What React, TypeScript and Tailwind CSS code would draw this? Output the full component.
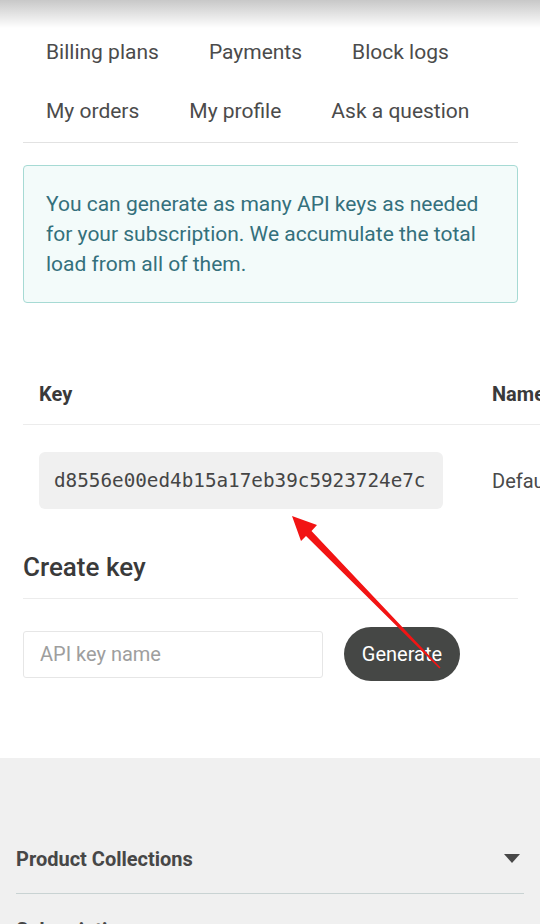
const navItems = ["Billing plans", "Payments", "Block logs", "My orders", "My profile", "Ask a question"];

function PointerArrow() {
    return (
        <svg className="pointer-events-none absolute left-0 top-0" width="540" height="924" viewBox="0 0 540 924">
            <polygon
                points="292,516 317,525 311.5,531 440.5,667.5 439.5,668.5 306,536 301,541"
                fill="#f21414"
            />
        </svg>
    );
}

export default function App() {
    return (
        <div className="relative min-h-[924px] overflow-hidden bg-white font-['Roboto',sans-serif]">
            {/* header shadow from above */}
            <div className="pointer-events-none absolute inset-x-0 top-0 h-[28px] bg-gradient-to-b from-[#c8c8c8] to-white" />

            <main className="pl-[23px] pr-[22px] pt-[23px]">
                {/* Account tabs */}
                <nav className="flex flex-wrap gap-x-[50px] border-b border-[#e2e2e2] pb-[1px] pl-[23px]">
                    {navItems.map((item) => (
                        <a key={item} className="text-[21px] leading-[59px] text-[#4b4b4b]">
                            {item}
                        </a>
                    ))}
                </nav>

                {/* Info */}
                <div className="mt-[22px] rounded-[4px] border border-[#a6dad4] bg-[#f3fbfa] px-[22px] py-[23px] text-[21px] leading-[30px] text-[#34707c]">
                    You can generate as many API keys as needed for your subscription. We accumulate the total load from all of them.
                </div>

                {/* Keys table */}
                <div className="-mr-[22px] mt-[60px] overflow-hidden">
                    <div className="w-[640px]">
                        <div className="flex h-[62px] items-center border-b border-[#ececec] text-[20px] font-bold text-[#3a3a3a]">
                            <div className="w-[453px] pl-4">Key</div>
                            <div className="pl-4">Name</div>
                        </div>
                        <div className="flex items-center pb-[28px] pt-[27px]">
                            <div className="w-[453px] pl-4">
                                <div className="w-[404px] rounded-[6px] bg-[#f0f0f0] px-[15px] py-[14px] font-['DejaVu_Sans_Mono',monospace] text-[19.3px] leading-[29px] text-[#454545]">
                                    d8556e00ed4b15a17eb39c5923724e7c
                                </div>
                            </div>
                            <div className="pl-4 text-[20px] text-[#4a4a4a]">Default</div>
                        </div>
                    </div>
                </div>

                {/* Create key */}
                <h2 className="mt-[12px] border-b border-[#ececec] pb-[13px] text-[26px] font-medium leading-[36px] text-[#3a3a3a]">
                    Create key
                </h2>
                <form className="mt-[28px] flex items-center gap-[21px]">
                    <input
                        placeholder="API key name"
                        className="h-[47px] w-[300px] rounded-[3px] border border-[#e6e6e6] px-[16px] text-[20px] text-[#444] outline-none placeholder:text-[#9e9e9e]"
                    />
                    <button type="button" className="h-[54px] w-[116px] rounded-full bg-[#454745] text-[20px] text-white">
                        Generate
                    </button>
                </form>
            </main>

            {/* Footer */}
            <footer className="mt-[77px] bg-[#f0f0f0] px-[16px] pb-10 pt-[89px]">
                <div className="flex items-center justify-between border-b border-[#c9d3d3] pb-[22px]">
                    <span className="text-[20px] font-bold leading-[24px] text-[#474747]">Product Collections</span>
                    <svg width="16" height="10" viewBox="0 0 16 10" className="mr-[4px]">
                        <polygon points="0,0 16,0 8,9" fill="#474747" />
                    </svg>
                </div>
                <div className="flex items-center justify-between pt-[24px]">
                    <span className="text-[20px] font-bold leading-[24px] text-[#474747]">Subscriptions</span>
                </div>
            </footer>

            <PointerArrow />
        </div>
    );
}
